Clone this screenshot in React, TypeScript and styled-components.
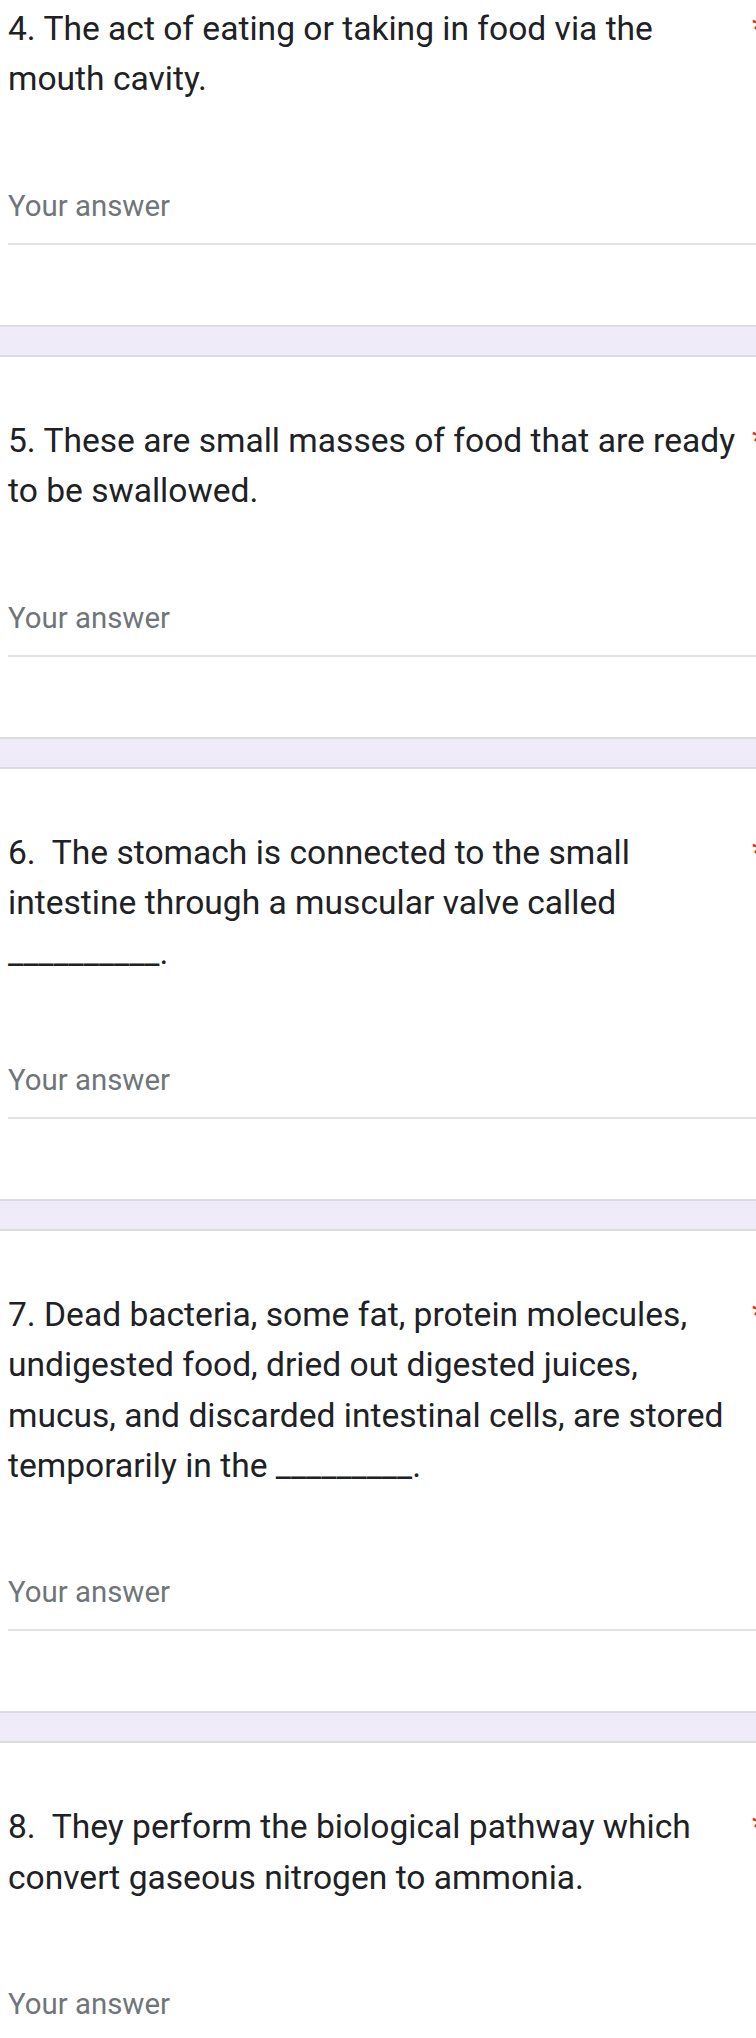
import React from 'react';
import styled, { createGlobalStyle } from 'styled-components';

const GlobalStyle = createGlobalStyle`
  html, body {
    margin: 0;
    padding: 0;
    background: #ffffff;
  }
  body {
    font-family: Roboto, "Liberation Sans", Arial, sans-serif;
    overflow-x: hidden;
  }
`;

interface Question {
  id: number;
  title: string;
}

const questions: Question[] = [
  { id: 4, title: '4. The act of eating or taking in food via the mouth cavity.' },
  { id: 5, title: '5. These are small masses of food that are ready to be swallowed.' },
  {
    id: 6,
    title:
      '6.  The stomach is connected to the small intestine through a muscular valve called __________.',
  },
  {
    id: 7,
    title:
      '7. Dead bacteria, some fat, protein molecules, undigested food, dried out digested juices, mucus, and discarded intestinal cells, are stored temporarily in the _________.',
  },
  { id: 8, title: '8.  They perform the biological pathway which convert gaseous nitrogen to ammonia.' },
];

const Page = styled.div`
  width: 756px;
  overflow: hidden;
`;

const Card = styled.section<{ $first?: boolean }>`
  padding: ${(p) => (p.$first ? '4px' : '59px')} 0 80px 8px;
  background: #ffffff;
`;

const TitleRow = styled.div`
  display: flex;
  align-items: flex-start;
  width: 760px;
`;

const TitleText = styled.div`
  width: 740px;
  font-size: 33.6px;
  line-height: 50.4px;
  color: #202124;
  white-space: pre-wrap;
`;

const Asterisk = styled.span`
  padding-left: 4px;
  font-size: 33.6px;
  line-height: 50.4px;
  color: #d93025;
`;

const AnswerField = styled.div`
  margin-top: 80px;
  padding-bottom: 16px;
  border-bottom: 2px solid #e2e2e2;
`;

const AnswerInput = styled.input`
  display: block;
  width: 100%;
  height: 42px;
  padding: 0;
  border: none;
  outline: none;
  background: transparent;
  font-family: Roboto, "Liberation Sans", Arial, sans-serif;
  font-size: 29.4px;
  color: #202124;

  &::placeholder {
    color: #70757a;
    opacity: 1;
  }
`;

const Divider = styled.div`
  height: 28px;
  background: #f0ebf8;
  border-top: 2px solid #dadce0;
  border-bottom: 2px solid #dadce0;
`;

const App: React.FC = () => {
  return (
    <Page>
      <GlobalStyle />
      {questions.map((q, i) => (
        <React.Fragment key={q.id}>
          <Card $first={i === 0}>
            <TitleRow>
              <TitleText>{q.title}</TitleText>
              <Asterisk>*</Asterisk>
            </TitleRow>
            <AnswerField>
              <AnswerInput type="text" placeholder="Your answer" />
            </AnswerField>
          </Card>
          {i < questions.length - 1 && <Divider />}
        </React.Fragment>
      ))}
    </Page>
  );
};

export default App;
